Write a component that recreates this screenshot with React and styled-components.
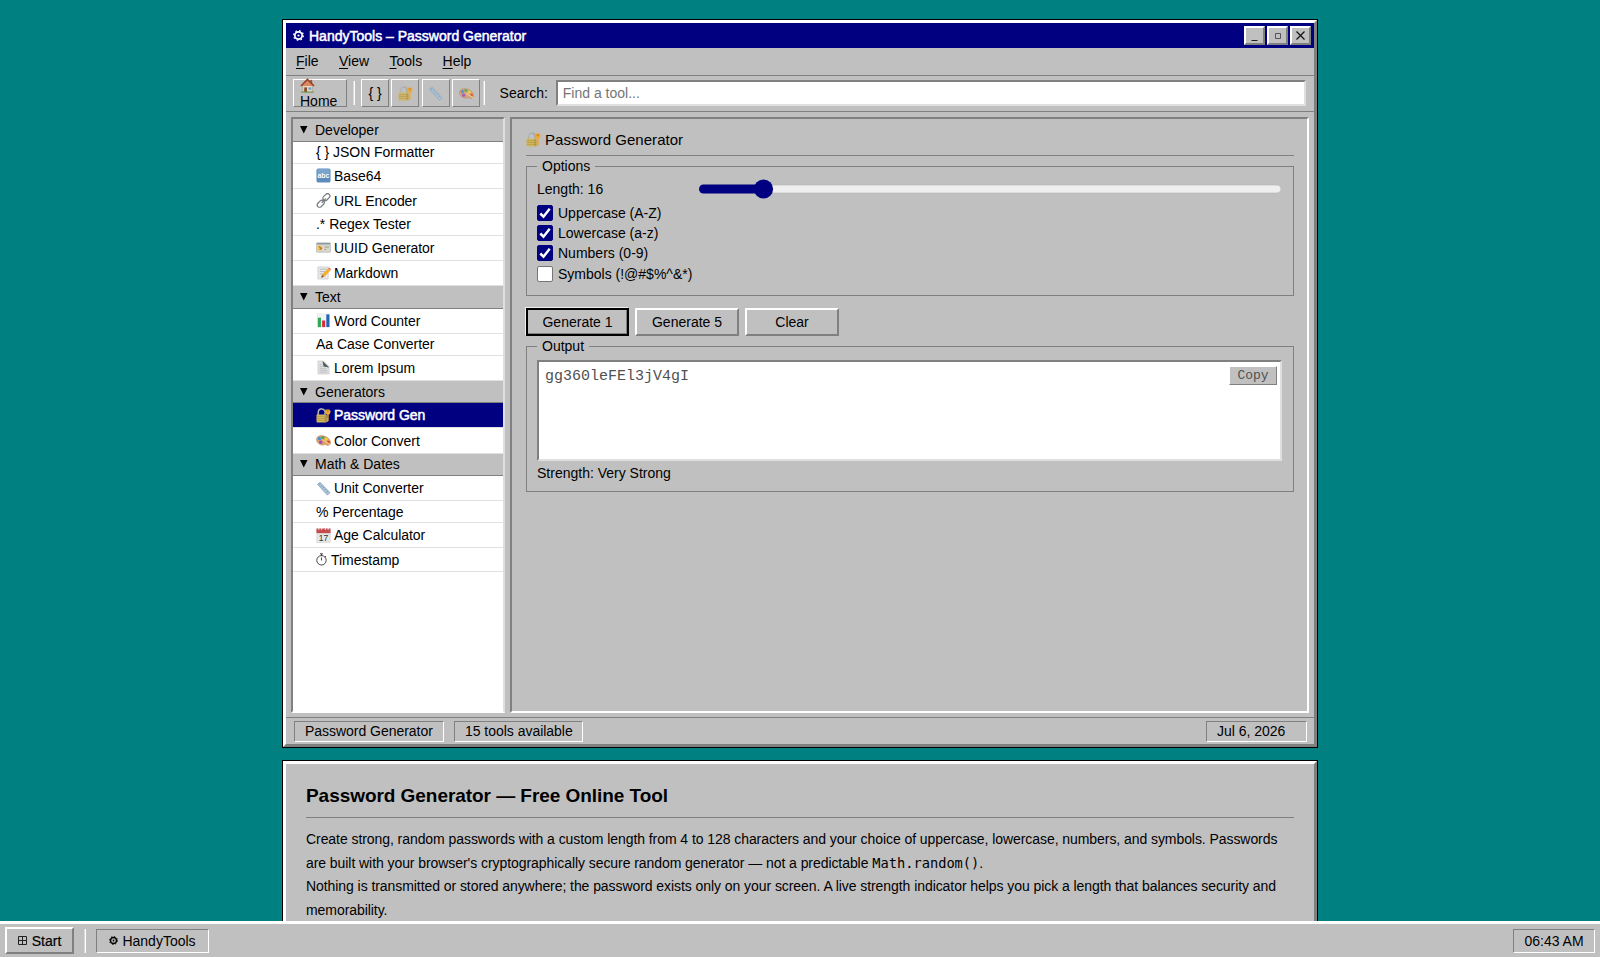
import styled, { createGlobalStyle, css } from "styled-components";

const GlobalStyle = createGlobalStyle`
  * {
    box-sizing: border-box;
  }

  body {
    margin: 0;
    height: 957px;
    overflow: hidden;
    background: #008080;
    color: #000;
    font: 14px/16px "Liberation Sans", Arial, sans-serif;
  }

  button, input {
    font: inherit;
    color: inherit;
  }
`

const raised = css`
  border-style: solid;
  border-color: #fff #808080 #808080 #fff;
`

const sunken = css`
  border-style: solid;
  border-color: #808080 #fff #fff #808080;
`

const Desktop = styled.div`
  height: 957px;
  display: flex;
  flex-direction: column;
  overflow: hidden;
`

const Workspace = styled.div`
  flex: 1;
  min-height: 0;
  overflow: hidden;
  padding-top: 20px;
  display: flex;
  flex-direction: column;
  align-items: center;
  gap: 14px;
`

const Window = styled.section`
  ${raised}
  width: 1034px;
  flex: none;
  height: ${props => props.height}px;
  border-width: 3px;
  background: #c0c0c0;
  box-shadow: 0 0 0 1px #000;
  display: flex;
  flex-direction: column;
`

const TitleBar = styled.header`
  height: 25px;
  background: #000080;
  color: #fff;
  display: flex;
  align-items: center;
  gap: 5px;
  padding: 0 3px 0 7px;
  -webkit-text-stroke: .5px #fff;

  h1 {
    flex: 1;
    margin: 0;
    font-size: 14px;
    font-weight: 400;
  }
`

const WindowButtons = styled.div`
  display: flex;
  gap: 2px;
`

const WindowButton = styled.button`
  ${raised}
  width: 21px;
  height: 19px;
  padding: 0;
  border-width: 2px;
  background: #c0c0c0;
  display: flex;
  align-items: center;
  justify-content: center;
`

const MenuBar = styled.nav`
  height: 28px;
  padding: 0 10px 1px;
  border-bottom: 1px solid #808080;
  display: flex;
  align-items: center;
  gap: 20.4px;

  u {
    text-underline-offset: 2px;
    text-decoration-thickness: 1px;
  }
`

const Toolbar = styled.div`
  height: 36px;
  padding: 0 8px 1px 7px;
  border-bottom: 1px solid #808080;
  display: flex;
  align-items: center;
`

const ToolButton = styled.button`
  ${raised}
  width: ${props => props.$wide ? 54 : 28}px;
  height: 28px;
  margin-right: ${props => props.$wide ? 6 : 2.4}px;
  padding: ${props => props.$wide ? "2px 0 0 6px" : 0};
  border-width: 1px;
  background: #c0c0c0;
  display: flex;
  flex-direction: ${props => props.$wide ? "column" : "row"};
  align-items: ${props => props.$wide ? "flex-start" : "center"};
  justify-content: center;
  line-height: 17px;

  svg {
    flex: none;
    opacity: ${props => props.$wide ? 1 : .85};
  }
`

const Divider = styled.span`
  width: 2px;
  height: 24px;
  background: #fff;
  border-left: 1px solid #d8d8d8;
  margin-right: ${props => props.$space}px;
`

const Search = styled.label`
  flex: 1;
  display: flex;
  align-items: center;
  gap: 8px;

  input {
    flex: 1;
    height: 26px;
    padding: 0 5px;
    border: 2px solid;
    border-color: #808080 #dfdfdf #dfdfdf #808080;
    background: #fff;
    outline: 0;
  }

  input::placeholder {
    color: #757575;
  }
`

const Body = styled.div`
  flex: 1;
  min-height: 0;
  display: flex;
  gap: 5px;
  padding: 5px 5px 4px;
`

const Sidebar = styled.aside`
  ${sunken}
  width: 214px;
  border-width: 2px;
  border-right-color: #dfdfdf;
  background: #fff;
`

const GroupTitle = styled.h2`
  margin: 0;
  height: 22.5px;
  padding: 0 7px;
  display: flex;
  align-items: center;
  gap: 7px;
  background: #c0c0c0;
  border-bottom: 1px solid #808080;
  font-size: 14px;
  font-weight: 400;

  svg {
    flex: none;
  }
`

const ToolLink = styled.a`
  height: ${props => props.$icon ? 25.15 : props.$tall ? 24 : 22}px;
  padding-left: 23px;
  display: flex;
  align-items: center;
  gap: ${props => props.$icon ? 3 : 4}px;
  border-bottom: 1px solid #e0e0e0;
  letter-spacing: -.05px;
  ${props => props.$active && css`
    background: #000080;
    color: #fff;
    -webkit-text-stroke: .5px #fff;
  `}

  svg {
    flex: none;
  }
`

const Main = styled.main`
  ${sunken}
  flex: 1;
  border-width: 2px;
  padding: 13px 13px 13px 14px;
`

const ToolTitle = styled.h2`
  margin: 0 0 2px;
  height: 24px;
  display: flex;
  align-items: flex-start;
  gap: 4px;
  border-bottom: 1px solid #808080;
  font-size: 15px;
  font-weight: 400;
  letter-spacing: .03px;
`

const Group = styled.fieldset`
  min-width: 0;
  margin: 0 0 ${props => props.$after || 0}px;
  height: ${props => props.height}px;
  padding: ${props => props.$top}px 11px 0 10px;
  border: 1px solid #808080;

  legend {
    padding: 0 5px;
    line-height: 16px;
  }
`

const LengthRow = styled.label`
  height: 18px;
  display: flex;
  align-items: center;

  span {
    width: 162px;
  }

  svg {
    display: block;
    flex: none;
  }
`

const Check = styled.label`
  height: 20.2px;
  display: flex;
  align-items: center;
  gap: 5px;
`

const Checks = styled.div`
  padding-top: 5px;
`

const Buttons = styled.div`
  display: flex;
  gap: 6px;
  margin-bottom: 2px;
`

const Button = styled.button`
  ${raised}
  width: ${props => props.width}px;
  height: 28px;
  padding: 0;
  border-width: 2px;
  background: #c0c0c0;
  ${props => props.$primary && css`
    border-color: #000;
    box-shadow: inset -1px -1px #808080, -1px -1px #eee;
  `}
`

const Output = styled.div`
  height: 101px;
  padding: 4px 3px 4px 6px;
  border: 2px solid;
  border-color: #808080 #dfdfdf #dfdfdf #808080;
  background: #fff;
  color: #505050;
  display: flex;
  align-items: flex-start;
  justify-content: space-between;
  font: 15px/21px "Liberation Mono", "Courier New", monospace;
`

const CopyButton = styled.button`
  ${raised}
  width: 48px;
  height: 19px;
  padding: 0;
  border-width: 1px;
  background: #c0c0c0;
  font-size: 13px;
  line-height: 15px;
`

const Strength = styled.p`
  margin: 4px 0 0;
`

const StatusBar = styled.footer`
  height: 27px;
  padding: 3px 7px 3px 8px;
  border-top: 1px solid #808080;
  display: flex;
  gap: 10px;
`

const StatusCell = styled.span`
  ${sunken}
  width: ${props => props.width}px;
  height: 21px;
  padding: 1px 10px 0;
  border-width: 1px;
  line-height: 17px;
  letter-spacing: -.03px;
  white-space: nowrap;

  &:last-child {
    margin-left: auto;
  }
`

const Article = styled.article`
  padding: 20px 20px 0;

  h2 {
    margin: 0 0 10px;
    height: 34px;
    border-bottom: 1px solid #808080;
    font-size: 19px;
    line-height: 24px;
    letter-spacing: -.05px;
  }

  p {
    margin: 0;
    line-height: 23.7px;
    letter-spacing: -.066px;
  }

  code {
    font: 13.7px/1 "DejaVu Sans Mono", monospace;
    letter-spacing: 0;
  }
`

const Taskbar = styled.footer`
  height: 36px;
  flex: none;
  padding: 0 5px;
  border-top: 3px solid #fff;
  background: #c0c0c0;
  display: flex;
  align-items: center;
`

const StartButton = styled.button`
  ${raised}
  width: 69px;
  height: 27px;
  padding: 0;
  border-width: 2px;
  background: #c0c0c0;
  display: flex;
  align-items: center;
  justify-content: center;
  gap: 5px;
  margin-right: 10px;
  -webkit-text-stroke: .2px #000;
`

const TaskItem = styled.div`
  ${sunken}
  height: 24px;
  width: ${props => props.width}px;
  border-width: 1px;
  display: flex;
  align-items: center;
  justify-content: center;
  gap: 4px;

  &:last-child {
    margin-left: auto;
  }
`

const Gear = ({ size = 11 }) => (
  <svg width={size} height={size} viewBox="0 0 12 12" fill="none" stroke="currentColor">
    <circle cx="6" cy="6" r="4" strokeWidth="1.9" />
    <circle cx="6" cy="6" r="5.3" strokeWidth="1.3" strokeDasharray="1.8 2.36" />
    <circle cx="6" cy="6" r="1.2" fill="currentColor" stroke="none" />
  </svg>
)

const glyphs = {
  home: (
    <>
      <path d="M3 8h10v7H3z" fill="#ead9bd" stroke="#a08a70" strokeWidth=".5" />
      <path d="M11 2h2v4h-2z" fill="#a4513a" />
      <path d="M1 8.5 8 1.5l7 7" fill="#d98965" stroke="#9c3f26" strokeWidth="1.6" />
      <path d="M4.5 10h3v5h-3z" fill="#8a4b2c" />
      <path d="M9 10h3v2.5H9z" fill="#5da4d8" />
      <path d="M1 15h14" stroke="#5b9a42" />
    </>
  ),
  lock: (
    <>
      <path d="M2.5 8V4.500a3.500 3.500 0 0 1 7 0V8" fill="none" stroke="#a4a7a8" strokeWidth="1.500" />
      <path d="M2 8V4.500a4 4 0 0 1 4-4" fill="none" stroke="#d5d7d8" strokeWidth=".5" />
      <rect x=".5" y="7" width="11" height="8.500" rx="1" fill="#d2b75c" />
      <path d="M1 9.200h10M1 11.200h10M1 13.200h10" stroke="#a99043" strokeWidth=".6" />
      <path d="M9 7.500h2v7.500H9z" fill="#a98d36" opacity=".6" />
      <path d="M10.300 1.500h4l1.400 2.200-1.200 3-1 .5v6.300l-1.200 1.300-1-1 .7-1.200-.8-1.200.8-1V7l-1.800-.8-.8-2.500z" fill="#f1a52c" />
      <circle cx="12.600" cy="3.200" r=".8" fill="#8a713a" />
    </>
  ),
  ruler: (
    <>
      <path d="m1.500 3.500 3-2 10.500 11-3 2.500z" fill="#a9c3da" stroke="#7f9bb4" strokeWidth=".7" />
      <path d="m4.500 2.500-1.300 1M6.500 4.600l-1.300 1M8.500 6.700l-1.300 1M10.500 8.800l-1.300 1M12.500 10.900l-1.300 1" stroke="#5c7d9a" strokeWidth=".7" />
    </>
  ),
  palette: (
    <>
      <path d="M.5 6.500C1 3 5.500 2 9 3.300c4 1.400 7 4.700 6.500 7.700-.5 2.400-3 2.800-4.500 1.700-1.400-1-2.300.4-4 .3C3 12.700.1 9.500.5 6.500z" fill="#d9a06b" stroke="#a86e40" strokeWidth=".4" />
      <circle cx="3.700" cy="6" r="1.700" fill="#3d8fe0" />
      <circle cx="7.300" cy="4.900" r="1.500" fill="#38aa4b" />
      <circle cx="11" cy="6.500" r="1.500" fill="#f5d533" />
      <circle cx="13.300" cy="9.700" r="1.500" fill="#e0442e" />
      <circle cx="5" cy="9.800" r="1.700" fill="#a045c9" />
      <path d="m7.500 7.500 7.500 5" stroke="#f0cd80" strokeWidth="1.200" />
    </>
  ),
  abc: (
    <>
      <rect x=".5" y=".5" width="15" height="15" rx="2" fill="#5d8cbc" />
      <rect x="1.500" y="1" width="13" height="6" rx="1.500" fill="#7ba4cd" />
      <text x="8" y="10.500" textAnchor="middle" fontSize="7.500" fontWeight="700" fill="#fff">abc</text>
    </>
  ),
  link: (
    <g fill="none" stroke="#75797c" strokeWidth="1.300">
      <rect x="6.800" y="2" width="8.500" height="5" rx="2.500" transform="rotate(-45 11 4.500)" />
      <rect x=".8" y="9" width="8.500" height="5" rx="2.500" transform="rotate(-45 5 11.500)" />
      <path d="m6 10.500 4.500-4.700" />
    </g>
  ),
  card: (
    <>
      <rect x=".5" y="3" width="15" height="10" rx=".5" fill="#d9d8cc" stroke="#a8a9a5" strokeWidth=".6" />
      <path d="M1 4h14" stroke="#8999a5" strokeWidth="1.500" />
      <path d="M2 6h4.500v5H2z" fill="#efbd52" />
      <path d="m3 7 3 2-2 1" stroke="#a35b20" fill="none" />
      <path d="M9 7.500h5M9 10h2" stroke="#999" />
    </>
  ),
  memo: (
    <>
      <path d="M2 2h11v13H2z" fill="#e7e8e9" stroke="#bdbec0" strokeWidth=".6" />
      <path d="M4 4.500h7M4 7h6M4 9.500h4" stroke="#a8acb0" strokeWidth=".8" />
      <path d="m5.500 13.500 1-3.500L13 3.500l2.300 2.300L9 12.500z" fill="#f5ae2d" />
      <path d="m13 3.500 1-1 2 2-.7 1.300z" fill="#e46b6d" />
      <path d="m5.500 13.500 1-3 2 2z" fill="#815c38" />
    </>
  ),
  chart: (
    <>
      <rect x="1.500" y="1" width="13" height="14" fill="#f1f3f5" stroke="#d4d7da" strokeWidth=".5" />
      <path d="M2 5h3.300v10H2z" fill="#2eaa55" />
      <path d="M6.500 8h3.300v7H6.500z" fill="#d12e42" />
      <path d="M11 1.500h3.300V15H11z" fill="#2164b5" />
    </>
  ),
  page: (
    <>
      <path d="M2 1h6l6 6v8H2z" fill="#dedfe0" stroke="#bfc1c2" strokeWidth=".5" />
      <path d="m7 1 7 7-6-1z" fill="#56595b" />
      <path d="M4 5h2M4 7h3M4 9h7M4 11h8M4 13h8" stroke="#b5b7b9" strokeWidth=".7" />
    </>
  ),
  calendar: (
    <>
      <path d="M.8 1.500h14.400V15.500H.8z" fill="#e5e6e6" stroke="#c6c7c8" strokeWidth=".5" />
      <path d="M.5.500h15v5H.5z" fill="#c64d4d" />
      <path d="M3 0v2M6 0v2M10 0v2M13 0v2" stroke="#eee" />
      <text x="8" y="13.800" textAnchor="middle" fontSize="9" fill="#333">17</text>
    </>
  ),
}

const Icon = ({ name, size = 15 }) => (
  <svg width={size} height={size} viewBox="0 0 16 16">{glyphs[name]}</svg>
)

const Stopwatch = () => (
  <svg width="11" height="13" viewBox="0 0 11 13" fill="none" stroke="#333" strokeWidth=".9">
    <circle cx="5.500" cy="7.300" r="4.700" />
    <path d="M5.500 4.500v3M4 .8h3M5.500 1v2M9 3l1 1" />
  </svg>
)

const CheckBox = ({ checked }) => (
  <svg width="16" height="16" viewBox="0 0 16 16">
    <rect x=".5" y=".5" width="15" height="15" rx="1.500" fill={checked ? "#000080" : "#fff"} stroke={checked ? "#000080" : "#767676"} />
    {checked && <path d="m3.300 8.500 3.200 3.200 6.200-8" fill="none" stroke="#fff" strokeWidth="2.500" />}
  </svg>
)

const Slider = () => (
  <svg width="583" height="20" viewBox="0 0 583 20">
    <rect x=".5" y="6" width="581.500" height="8" rx="4" fill="#efefef" stroke="#b2b2b2" strokeWidth=".6" />
    <rect x="0" y="5.500" width="70" height="9" rx="4.500" fill="#000080" />
    <circle cx="64.500" cy="10" r="9.600" fill="#000080" />
  </svg>
)

const groups = [
  {
    name: "Developer",
    tools: [
      { prefix: "{ }", name: "JSON Formatter" },
      { icon: "abc", name: "Base64" },
      { icon: "link", name: "URL Encoder" },
      { prefix: ".*", name: "Regex Tester" },
      { icon: "card", name: "UUID Generator" },
      { icon: "memo", name: "Markdown" },
    ],
  },
  {
    name: "Text",
    tools: [
      { icon: "chart", name: "Word Counter" },
      { prefix: "Aa", name: "Case Converter" },
      { icon: "page", name: "Lorem Ipsum" },
    ],
  },
  {
    name: "Generators",
    tools: [
      { icon: "lock", name: "Password Gen", active: true },
      { icon: "palette", name: "Color Convert" },
    ],
  },
  {
    name: "Math & Dates",
    tools: [
      { icon: "ruler", name: "Unit Converter" },
      { prefix: "%", name: "Percentage" },
      { icon: "calendar", name: "Age Calculator" },
      { prefix: <Stopwatch />, name: "Timestamp", tall: true },
    ],
  },
]

const options = [
  ["Uppercase (A-Z)", true],
  ["Lowercase (a-z)", true],
  ["Numbers (0-9)", true],
  ["Symbols (!@#$%^&*)", false],
]

const App = () => {
  return (
    <Desktop>
      <GlobalStyle />
      <Workspace>
        <Window height={727}>
          <TitleBar>
            <Gear />
            <h1>HandyTools – Password Generator</h1>
            <WindowButtons>
              <WindowButton>
                <svg width="11" height="11" stroke="#222"><path d="M2.500 10.500h6" /></svg>
              </WindowButton>
              <WindowButton>
                <svg width="11" height="11" fill="none" stroke="#555"><path d="M3.500 3.500h5v5h-5z" /></svg>
              </WindowButton>
              <WindowButton>
                <svg width="11" height="11" stroke="#111" strokeWidth="1.200"><path d="m1.500 1.500 8 8M9.500 1.500l-8 8" /></svg>
              </WindowButton>
            </WindowButtons>
          </TitleBar>
          <MenuBar>
            {["File", "View", "Tools", "Help"].map(item => (
              <span key={item}><u>{item[0]}</u>{item.slice(1)}</span>
            ))}
          </MenuBar>
          <Toolbar>
            <ToolButton $wide><Icon name="home" />Home</ToolButton>
            <Divider $space={6} />
            <ToolButton>{"{ }"}</ToolButton>
            <ToolButton><Icon name="lock" /></ToolButton>
            <ToolButton><Icon name="ruler" /></ToolButton>
            <ToolButton><Icon name="palette" /></ToolButton>
            <Divider $space={15} />
            <Search>Search:<input placeholder="Find a tool..." /></Search>
          </Toolbar>
          <Body>
            <Sidebar>
              {groups.map(group => (
                <div key={group.name}>
                  <GroupTitle>
                    <svg width="8" height="8"><path d="M0 0h7.500L3.750 7.500z" /></svg>
                    {group.name}
                  </GroupTitle>
                  {group.tools.map(tool => (
                    <ToolLink key={tool.name} $icon={tool.icon} $tall={tool.tall} $active={tool.active}>
                      {tool.icon ? <Icon name={tool.icon} /> : tool.prefix}
                      <span>{tool.name}</span>
                    </ToolLink>
                  ))}
                </div>
              ))}
            </Sidebar>
            <Main>
              <ToolTitle><Icon name="lock" />Password Generator</ToolTitle>
              <Group height={138} $top={6} $after={12}>
                <legend>Options</legend>
                <LengthRow><span>Length: 16</span><Slider /></LengthRow>
                <Checks>
                  {options.map(([label, checked]) => (
                    <Check key={label}><CheckBox checked={checked} />{label}</Check>
                  ))}
                </Checks>
              </Group>
              <Buttons>
                <Button width={103} $primary>Generate 1</Button>
                <Button width={104}>Generate 5</Button>
                <Button width={94}>Clear</Button>
              </Buttons>
              <Group height={154} $top={6}>
                <legend>Output</legend>
                <Output>
                  gg360leFEl3jV4gI
                  <CopyButton>Copy</CopyButton>
                </Output>
                <Strength>Strength: Very Strong</Strength>
              </Group>
            </Main>
          </Body>
          <StatusBar>
            <StatusCell width={150}>Password Generator</StatusCell>
            <StatusCell width={129}>15 tools available</StatusCell>
            <StatusCell width={101}>Jul 6, 2026</StatusCell>
          </StatusBar>
        </Window>
        <Window height={300}>
          <Article>
            <h2>Password Generator — Free Online Tool</h2>
            <p>
              Create strong, random passwords with a custom length from 4 to 128 characters and your choice of uppercase, lowercase, numbers, and symbols. Passwords are built with your browser's cryptographically secure random generator — not a predictable <code>Math.random()</code>.
            </p>
            <p>
              Nothing is transmitted or stored anywhere; the password exists only on your screen. A live strength indicator helps you pick a length that balances security and memorability.
            </p>
          </Article>
        </Window>
      </Workspace>
      <Taskbar>
        <StartButton>
          <svg width="9" height="9" fill="none" stroke="#222"><path d="M.5.5h8v8h-8zM4.500.5v8M.5 4.500h8" /></svg>
          Start
        </StartButton>
        <Divider $space={10} />
        <TaskItem width={113}><Gear size={9} />HandyTools</TaskItem>
        <TaskItem width={82}>06:43 AM</TaskItem>
      </Taskbar>
    </Desktop>
  );
};

export default App;
